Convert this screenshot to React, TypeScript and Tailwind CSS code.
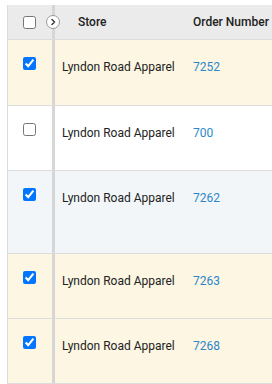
const rows = [
  { checked: true, store: 'Lyndon Road Apparel', order: '7252', bg: 'bg-[#fcf6e3]', h: 'h-[66px]' },
  { checked: false, store: 'Lyndon Road Apparel', order: '700', bg: 'bg-white', h: 'h-[65px]' },
  { checked: true, store: 'Lyndon Road Apparel', order: '7262', bg: 'bg-[#f3f6f9]', h: 'h-[83px]' },
  { checked: true, store: 'Lyndon Road Apparel', order: '7263', bg: 'bg-[#fcf6e3]', h: 'h-[65px]' },
  { checked: true, store: 'Lyndon Road Apparel', order: '7268', bg: 'bg-[#fcf6e3]', h: 'h-[65px]' },
];

export default function App() {
  return (
    <div className="w-[272px] h-[384px] overflow-hidden bg-white pt-[5px] pl-[7px] font-['Roboto',sans-serif] text-[12px] text-[#222]">
      <div className="w-[400px] border-l border-[#dcdcdc]">
        {/* Header */}
        <div className="flex h-[35px] bg-[#ebebeb] border-b border-[#dcdcdc]">
          <div className="relative w-[44px] shrink-0 flex items-center pl-[15px]">
            <input type="checkbox" readOnly className="m-0 w-[13px] h-[13px]" />
            <span className="absolute right-[-8px] top-[10px] z-10 flex h-[14px] w-[14px] items-center justify-center rounded-full border border-[#9a9a9a] bg-white">
              <svg width="8" height="8" viewBox="0 0 8 8" fill="none">
                <path d="M3 1.5 L5.5 4 L3 6.5" stroke="#333" strokeWidth="1.4" strokeLinecap="round" strokeLinejoin="round" />
              </svg>
            </span>
          </div>
          <div className="w-[3px] shrink-0 bg-[#d6d6d6]" />
          <div className="w-[131px] shrink-0 flex items-center pl-[23px] font-medium">Store</div>
          <div className="flex items-center pl-[7px] font-medium">Order Number</div>
        </div>

        {/* Rows */}
        {rows.map((row, i) => (
          <div key={i} className={`flex ${row.h} ${row.bg} border-b border-[#dcdcdc]`}>
            <div className="w-[44px] shrink-0 pl-[15px] pt-[17px]">
              <input type="checkbox" readOnly checked={row.checked} className="m-0 w-[13px] h-[13px] block" />
            </div>
            <div className="w-[3px] shrink-0 bg-[#d6d6d6]" />
            <div className="w-[131px] shrink-0 pl-[7px] pt-[19px] leading-[16px]">{row.store}</div>
            <div className="pl-[7px] pt-[19px] leading-[16px] text-[#2b87c9]">{row.order}</div>
          </div>
        ))}
      </div>
    </div>
  );
}
